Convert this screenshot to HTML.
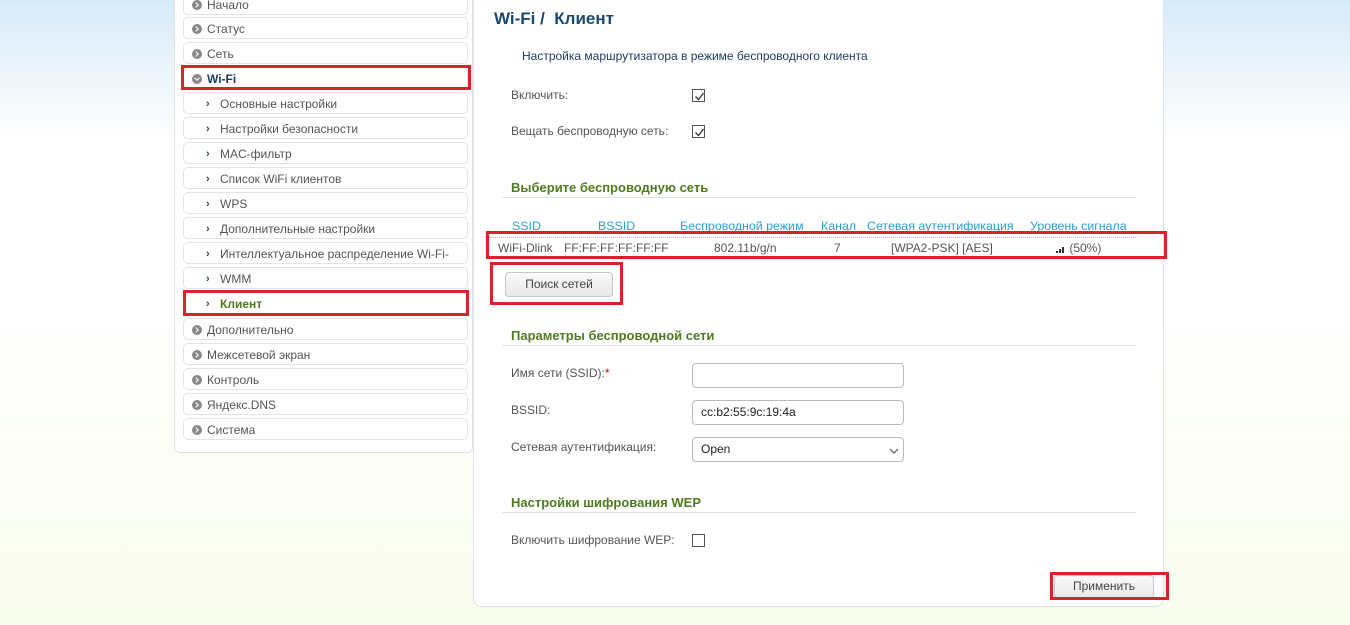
<!DOCTYPE html>
<html><head><meta charset="utf-8"><style>
*{box-sizing:border-box;margin:0;padding:0}
body{width:1350px;height:625px;overflow:hidden;position:relative;font-family:"Liberation Sans",Arial,sans-serif;font-size:12px;color:#555;
background:linear-gradient(#d6ebfa 0px,#eef6fc 80px,#ffffff 140px,#ffffff 300px,#f8fcec 625px);}
.abs{position:absolute}
#side{left:174px;top:-10px;width:299px;height:463px;background:#fff;border:1px solid #e2e2e2;border-radius:0 0 6px 6px}
.it{position:absolute;left:183px;width:285px;height:22px;border:1px solid #e4e4e4;border-radius:5px;background:#fff;line-height:23px;font-size:12px;color:#555}
.it .ic{position:absolute;left:8px;top:6px;width:10px;height:10px;border-radius:50%;background:#888}
.it .ic:after{content:"";position:absolute;left:2px;top:3px;width:3px;height:3px;border-right:1.5px solid #fff;border-bottom:1.5px solid #fff;transform:rotate(-45deg)}
.it .ic.dn:after{left:3px;top:1.5px;transform:rotate(45deg)}
.it .t{position:absolute;left:23px}
.it .ar{position:absolute;left:22px;top:0;color:#1c4a6e;font-weight:bold;font-size:11px}
.it .st{position:absolute;left:36px}
.red{position:absolute;border:3px solid #d9222a}
#main{left:473px;top:-10px;width:691px;height:617px;background:#fff;border:1px solid #e2e2e2;border-radius:0 0 8px 8px}
.h{position:absolute;left:511px;font-weight:bold;font-size:13px;color:#4f7b1f}
.ln{position:absolute;left:502px;width:634px;height:1px;background:#e0e0e0}
.lb{position:absolute;left:511px;font-size:12px;color:#555}
.cb{position:absolute;left:692px;width:13px;height:13px;border:1px solid #555;background:#fff}
.cb svg{position:absolute;left:1px;top:1px}
.inp{position:absolute;left:692px;width:212px;height:25px;border:1px solid #bbb;border-radius:4px;background:#fff;font-size:12px;color:#222;padding-left:8px;line-height:23px}
.th{position:absolute;top:219px;color:#2a9fd6;font-size:12.4px;text-decoration:underline}
.td{position:absolute;top:241px;color:#555;font-size:12px}
.btn{position:absolute;border:1px solid #c8c8c8;border-radius:4px;background:linear-gradient(#fafafa,#e8e8e8);font-size:12px;color:#444;text-align:center}
</style></head><body>
<div id="side" class="abs"></div>
<div class="it" style="top:-7px"><span class="ic"></span><span class="t">Начало</span></div>
<div class="it" style="top:17px"><span class="ic"></span><span class="t">Статус</span></div>
<div class="it" style="top:42px"><span class="ic"></span><span class="t">Сеть</span></div>
<div class="it" style="top:67px"><span class="ic dn"></span><span class="t" style="font-weight:bold;color:#1c3a5e">Wi-Fi</span></div>
<div class="it" style="top:92px"><span class="ar">›</span><span class="st">Основные настройки</span></div>
<div class="it" style="top:117px"><span class="ar">›</span><span class="st">Настройки безопасности</span></div>
<div class="it" style="top:142px"><span class="ar">›</span><span class="st">MAC-фильтр</span></div>
<div class="it" style="top:167px"><span class="ar">›</span><span class="st">Список WiFi клиентов</span></div>
<div class="it" style="top:192px"><span class="ar">›</span><span class="st">WPS</span></div>
<div class="it" style="top:217px"><span class="ar">›</span><span class="st">Дополнительные настройки</span></div>
<div class="it" style="top:242px"><span class="ar">›</span><span class="st">Интеллектуальное распределение Wi-Fi-</span></div>
<div class="it" style="top:267px"><span class="ar">›</span><span class="st">WMM</span></div>
<div class="it" style="top:292px"><span class="ar">›</span><span class="st" style="font-weight:bold;color:#4f7b1f">Клиент</span></div>
<div class="it" style="top:318px"><span class="ic"></span><span class="t">Дополнительно</span></div>
<div class="it" style="top:343px"><span class="ic"></span><span class="t">Межсетевой экран</span></div>
<div class="it" style="top:368px"><span class="ic"></span><span class="t">Контроль</span></div>
<div class="it" style="top:393px"><span class="ic"></span><span class="t">Яндекс.DNS</span></div>
<div class="it" style="top:418px"><span class="ic"></span><span class="t">Система</span></div>
<div class="red" style="left:181px;top:65px;width:290px;height:25px"></div>
<div class="red" style="left:183px;top:290px;width:286px;height:26px"></div>

<div id="main" class="abs"></div>
<div class="abs" style="left:494px;top:9px;font-size:17px;font-weight:bold;color:#1c4a6e">Wi-Fi /&nbsp; Клиент</div>
<div class="abs" style="left:522px;top:49px;font-size:12px;color:#1c3a5e">Настройка маршрутизатора в режиме беспроводного клиента</div>
<div class="lb" style="top:88px">Включить:</div>
<div class="cb" style="top:89px"><svg width="11" height="11"><path d="M1.5 5.5 L4.5 8.5 L9.5 2" stroke="#333" stroke-width="1.3" fill="none"/></svg></div>
<div class="lb" style="top:124px">Вещать беспроводную сеть:</div>
<div class="cb" style="top:125px"><svg width="11" height="11"><path d="M1.5 5.5 L4.5 8.5 L9.5 2" stroke="#333" stroke-width="1.3" fill="none"/></svg></div>

<div class="h" style="top:180px">Выберите беспроводную сеть</div>
<div class="ln" style="top:197px"></div>
<div class="th" style="left:512px">SSID</div>
<div class="th" style="left:598px">BSSID</div>
<div class="th" style="left:680px">Беспроводной режим</div>
<div class="th" style="left:821px">Канал</div>
<div class="th" style="left:867px">Сетевая аутентификация</div>
<div class="th" style="left:1030px">Уровень сигнала</div>
<div class="abs" style="left:488px;top:237px;width:648px;border-top:1px dotted #bbb"></div>
<div class="abs" style="left:488px;top:258px;width:648px;border-top:1px dotted #bbb"></div>
<div class="td" style="left:498px">WiFi-Dlink</div>
<div class="td" style="left:564px">FF:FF:FF:FF:FF:FF</div>
<div class="td" style="left:714px">802.11b/g/n</div>
<div class="td" style="left:834px">7</div>
<div class="td" style="left:891px">[WPA2-PSK] [AES]</div>
<div class="td" style="left:1056px"><svg width="10" height="8" style="vertical-align:-1px"><rect x="0" y="6" width="2" height="2" fill="#333"/><rect x="3" y="4" width="2" height="4" fill="#333"/><rect x="6" y="2" width="2" height="6" fill="#333"/></svg> (50%)</div>
<div class="red" style="left:486px;top:231px;width:681px;height:28px"></div>
<div class="btn" style="left:505px;top:272px;width:108px;height:25px;line-height:23px">Поиск сетей</div>
<div class="red" style="left:490px;top:262px;width:133px;height:43px"></div>

<div class="h" style="top:328px">Параметры беспроводной сети</div>
<div class="ln" style="top:345px"></div>
<div class="lb" style="top:366px">Имя сети (SSID):<span style="color:#c00">*</span></div>
<div class="inp" style="top:363px"></div>
<div class="lb" style="top:403px">BSSID:</div>
<div class="inp" style="top:400px">cc:b2:55:9c:19:4a</div>
<div class="lb" style="top:440px">Сетевая аутентификация:</div>
<div class="inp" style="top:437px">Open<svg width="10" height="6" style="position:absolute;right:4px;top:10px"><path d="M1 1 L5 5 L9 1" stroke="#555" stroke-width="1.2" fill="none"/></svg></div>

<div class="h" style="top:495px">Настройки шифрования WEP</div>
<div class="ln" style="top:512px"></div>
<div class="lb" style="top:533px">Включить шифрование WEP:</div>
<div class="cb" style="top:534px"></div>

<div class="btn" style="left:1054px;top:575px;width:100px;height:23px;line-height:21px">Применить</div>
<div class="red" style="left:1050px;top:572px;width:119px;height:28px"></div>
</body></html>
